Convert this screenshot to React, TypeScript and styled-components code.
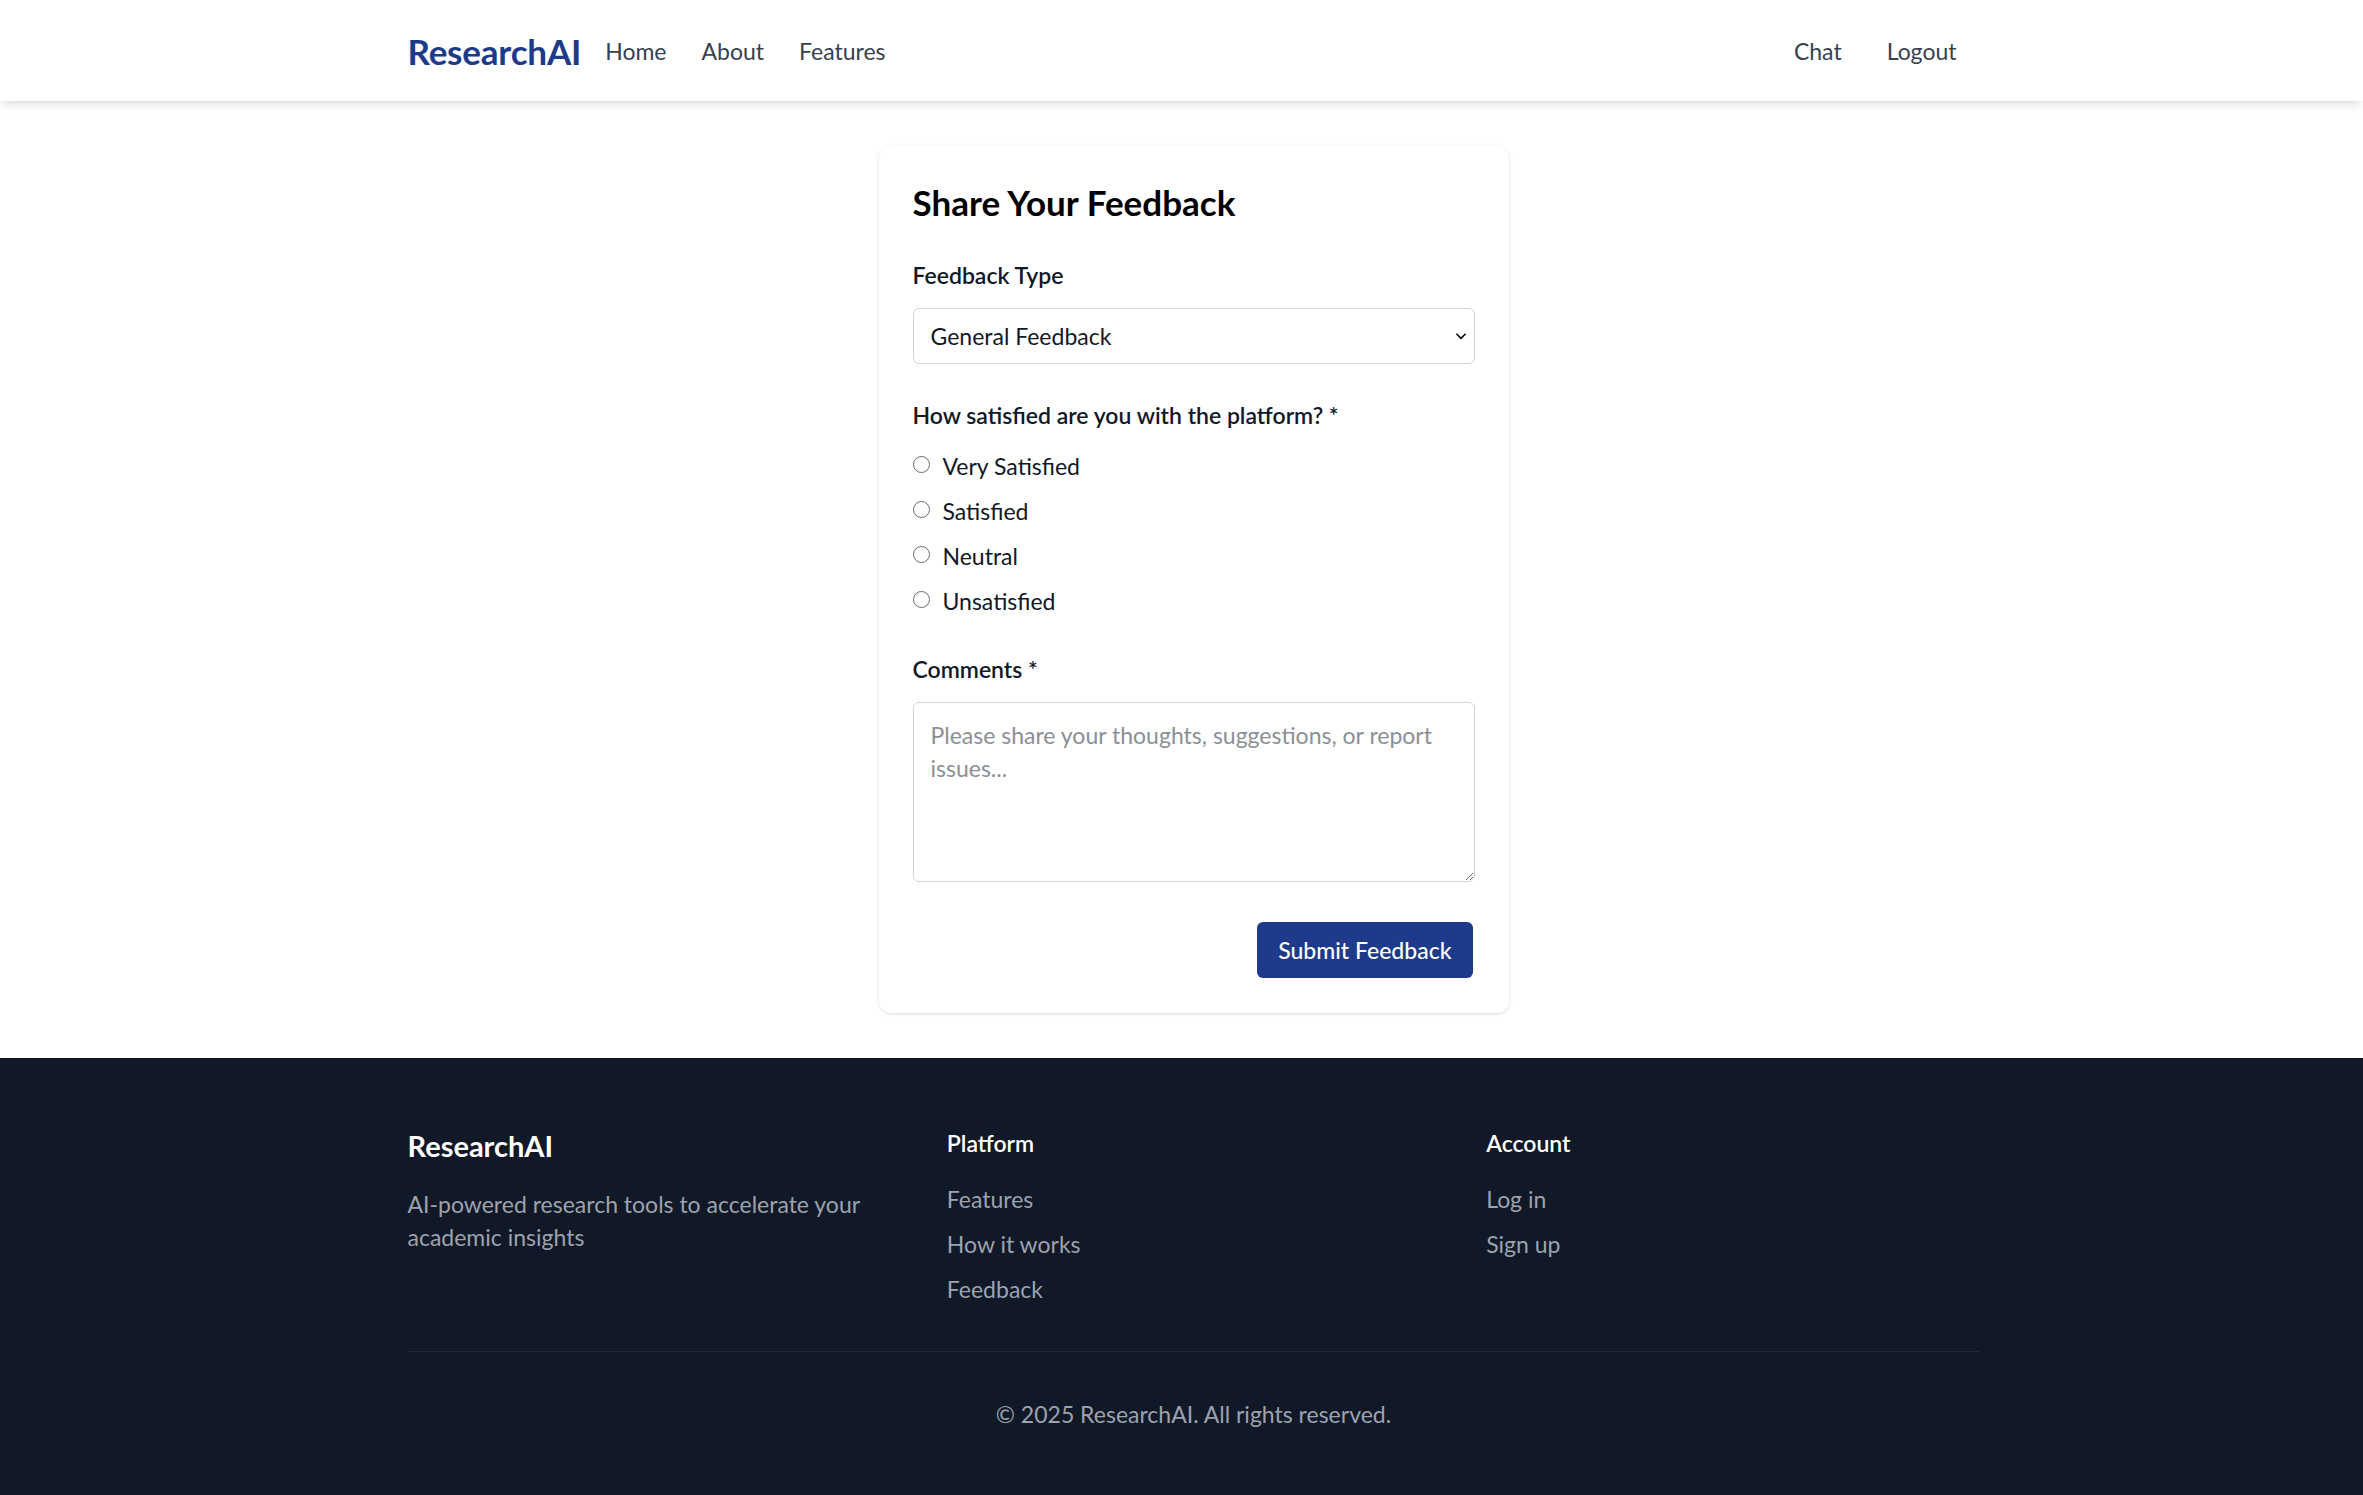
import React, { useState } from 'react';
import styled, { createGlobalStyle } from 'styled-components';

const COLOR_BRAND = '#1e3a8a';
const COLOR_TEXT = '#111827';
const COLOR_NAV_LINK = '#374151';
const COLOR_FOOTER_BG = '#111827';
const COLOR_FOOTER_TEXT = '#9ca3af';
const FONT_STACK = '"Segoe UI", Lato, "Liberation Sans", sans-serif';

const GlobalStyle = createGlobalStyle`
  html, body {
    margin: 0;
    padding: 0;
    background: #ffffff;
    font-family: ${FONT_STACK};
    color: ${COLOR_TEXT};
  }
  * {
    box-sizing: border-box;
  }
`;

const Page = styled.div`
  display: flex;
  flex-direction: column;
`;

const NavBar = styled.header`
  height: 101px;
  background: #ffffff;
  box-shadow: 0 6px 10px -2px rgba(0, 0, 0, 0.1), 0 3px 6px -3px rgba(0, 0, 0, 0.08);
  position: relative;
  z-index: 2;
`;

// the layout sits slightly right of true centre in the reference
const Container = styled.div`
  width: 1572px;
  margin-left: calc((100% - 1572px) / 2 + 12px);
`;

const NavInner = styled(Container)`
  height: 100%;
  display: flex;
  align-items: center;
  justify-content: space-between;
  padding-right: 23px;
`;

const NavGroup = styled.nav<{ $gap: number }>`
  display: flex;
  align-items: center;
  gap: ${(p) => p.$gap}px;
`;

const Logo = styled.a`
  font-size: 35px;
  font-weight: 700;
  color: ${COLOR_BRAND};
  text-decoration: none;
  margin-right: -11px;
  letter-spacing: -0.2px;
`;

const NavLink = styled.a`
  font-size: 23px;
  color: ${COLOR_NAV_LINK};
  text-decoration: none;
`;

const Main = styled.main`
  display: flex;
  justify-content: center;
  align-items: flex-start;
  padding: 45px 0 45px 24px;
`;

const Card = styled.section`
  width: 630px;
  background: #ffffff;
  border-radius: 12px;
  box-shadow: 0 1px 4px rgba(0, 0, 0, 0.1), 0 1px 2px rgba(0, 0, 0, 0.05);
  padding: 34px 35px 35px 34px;
`;

const Title = styled.h1`
  margin: 0 0 33px;
  font-size: 35px;
  line-height: 44px;
  font-weight: 700;
  color: #000000;
`;

const Field = styled.div<{ $mb: number }>`
  margin-bottom: ${(p) => p.$mb}px;
`;

const Label = styled.label`
  display: block;
  font-size: 23px;
  line-height: 36px;
  font-weight: 600;
  color: ${COLOR_TEXT};
  margin-bottom: 15px;
`;

const SelectWrap = styled.div`
  position: relative;
  width: 562px;
`;

const Select = styled.select`
  appearance: none;
  width: 100%;
  height: 56px;
  padding: 0 40px 0 17px;
  font-family: ${FONT_STACK};
  font-size: 23px;
  color: ${COLOR_TEXT};
  background: #ffffff;
  border: 1.5px solid #d1d5db;
  border-radius: 6px;
  outline: none;
`;

const Chevron = styled.svg`
  position: absolute;
  right: 7px;
  top: 50%;
  transform: translateY(-50%);
  pointer-events: none;
`;

const RadioList = styled.div`
  display: flex;
  flex-direction: column;
  gap: 9px;
`;

const RadioRow = styled.label`
  display: flex;
  align-items: center;
  gap: 13px;
  font-size: 23px;
  line-height: 36px;
  color: ${COLOR_TEXT};
  cursor: pointer;
`;

const Radio = styled.input`
  appearance: none;
  margin: -4px 0 0 0;
  width: 17px;
  height: 17px;
  border: 1.5px solid #6b6b6b;
  border-radius: 50%;
  background: #ffffff;

  &:checked {
    border-color: ${COLOR_BRAND};
    background: radial-gradient(circle, ${COLOR_BRAND} 0 4px, #ffffff 4.5px);
  }
`;

const TextArea = styled.textarea`
  display: block;
  width: 562px;
  height: 180px;
  padding: 16px 17px;
  font-family: ${FONT_STACK};
  font-size: 23px;
  line-height: 33px;
  color: ${COLOR_TEXT};
  border: 1.5px solid #d1d5db;
  border-radius: 6px;
  outline: none;
  resize: vertical;

  &::placeholder {
    color: #8b8f96;
  }
`;

const Actions = styled.div`
  display: flex;
  justify-content: flex-end;
  margin-top: 40px;
  padding-right: 1px;
`;

const SubmitButton = styled.button`
  height: 56px;
  padding: 0 21px;
  background: ${COLOR_BRAND};
  color: #ffffff;
  font-family: ${FONT_STACK};
  font-size: 23px;
  font-weight: 500;
  border: none;
  border-radius: 6px;
  cursor: pointer;
`;

const Footer = styled.footer`
  background: ${COLOR_FOOTER_BG};
  padding: 67px 0 72px;
`;

const FooterGrid = styled.div`
  display: grid;
  grid-template-columns: repeat(3, 1fr);
  gap: 46px;
`;

const FooterBrand = styled.h2`
  margin: 0 0 21px;
  font-size: 29px;
  line-height: 42px;
  font-weight: 700;
  color: #ffffff;
`;

const FooterText = styled.p`
  margin: 0;
  max-width: 470px;
  font-size: 23px;
  line-height: 33px;
  color: ${COLOR_FOOTER_TEXT};
`;

const FooterHeading = styled.h3`
  margin: 0 0 20px;
  font-size: 23px;
  line-height: 36px;
  font-weight: 600;
  color: #ffffff;
`;

const FooterLinks = styled.ul`
  list-style: none;
  margin: 0;
  padding: 0;
  display: flex;
  flex-direction: column;
  gap: 9px;
`;

const FooterLink = styled.a`
  display: block;
  font-size: 23px;
  line-height: 36px;
  color: ${COLOR_FOOTER_TEXT};
  text-decoration: none;
`;

const Divider = styled.div`
  margin-top: 44px;
  padding-top: 44px;
  border-top: 1.5px solid #1f2937;
  text-align: center;
  font-size: 23px;
  line-height: 36px;
  color: ${COLOR_FOOTER_TEXT};
`;

const options = ['Very Satisfied', 'Satisfied', 'Neutral', 'Unsatisfied'];

const App = () => {
  const [satisfaction, setSatisfaction] = useState('');
  const [comments, setComments] = useState('');

  return (
    <Page>
      <GlobalStyle />
      <NavBar>
        <NavInner>
          <NavGroup $gap={35}>
            <Logo href="#">ResearchAI</Logo>
            <NavLink href="#">Home</NavLink>
            <NavLink href="#">About</NavLink>
            <NavLink href="#">Features</NavLink>
          </NavGroup>
          <NavGroup $gap={45}>
            <NavLink href="#">Chat</NavLink>
            <NavLink href="#">Logout</NavLink>
          </NavGroup>
        </NavInner>
      </NavBar>

      <Main>
        <Card>
          <Title>Share Your Feedback</Title>

          <Field $mb={33}>
            <Label>Feedback Type</Label>
            <SelectWrap>
              <Select defaultValue="general">
                <option value="general">General Feedback</option>
                <option value="bug">Bug Report</option>
                <option value="feature">Feature Request</option>
              </Select>
              <Chevron width="14" height="14" viewBox="0 0 24 24" fill="none" stroke="#111" strokeWidth="3" strokeLinecap="round" strokeLinejoin="round">
                <path d="M5 9l7 7 7-7" />
              </Chevron>
            </SelectWrap>
          </Field>

          <Field $mb={32}>
            <Label>How satisfied are you with the platform? *</Label>
            <RadioList>
              {options.map((o) => (
                <RadioRow key={o}>
                  <Radio
                    type="radio"
                    name="satisfaction"
                    value={o}
                    checked={satisfaction === o}
                    onChange={() => setSatisfaction(o)}
                  />
                  {o}
                </RadioRow>
              ))}
            </RadioList>
          </Field>

          <Field $mb={0}>
            <Label>Comments *</Label>
            <TextArea
              placeholder="Please share your thoughts, suggestions, or report issues..."
              value={comments}
              onChange={(e) => setComments(e.target.value)}
            />
          </Field>

          <Actions>
            <SubmitButton>Submit Feedback</SubmitButton>
          </Actions>
        </Card>
      </Main>

      <Footer>
        <Container>
          <FooterGrid>
            <div>
              <FooterBrand>ResearchAI</FooterBrand>
              <FooterText>AI-powered research tools to accelerate your academic insights</FooterText>
            </div>
            <div>
              <FooterHeading>Platform</FooterHeading>
              <FooterLinks>
                <li><FooterLink href="#">Features</FooterLink></li>
                <li><FooterLink href="#">How it works</FooterLink></li>
                <li><FooterLink href="#">Feedback</FooterLink></li>
              </FooterLinks>
            </div>
            <div>
              <FooterHeading>Account</FooterHeading>
              <FooterLinks>
                <li><FooterLink href="#">Log in</FooterLink></li>
                <li><FooterLink href="#">Sign up</FooterLink></li>
              </FooterLinks>
            </div>
          </FooterGrid>
          <Divider>© 2025 ResearchAI. All rights reserved.</Divider>
        </Container>
      </Footer>
    </Page>
  );
};

export default App;
